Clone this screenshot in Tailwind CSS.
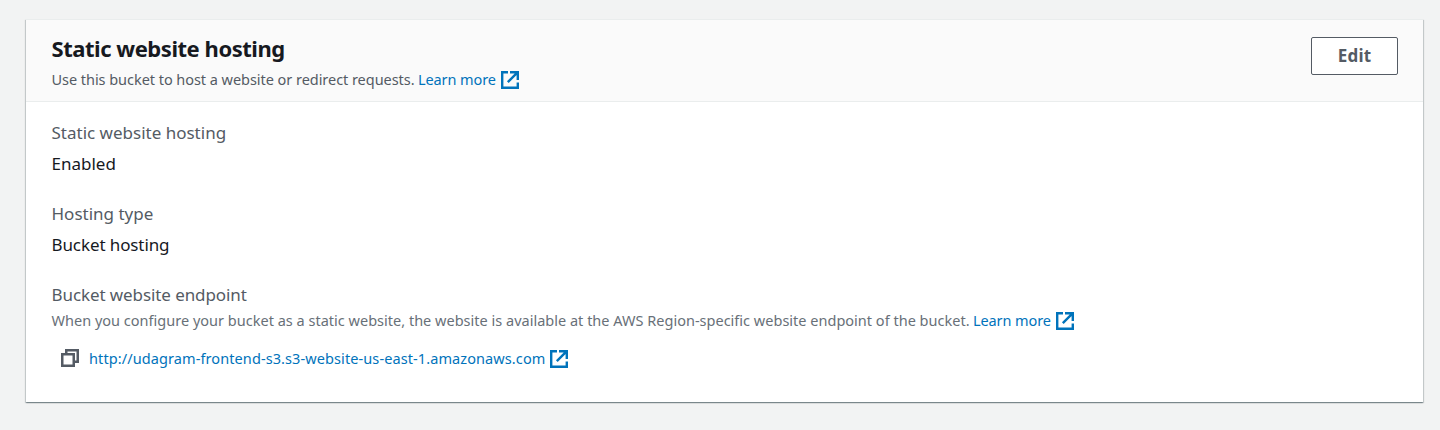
<!DOCTYPE html>
<html lang="en"><head><meta charset="utf-8"><title>Static website hosting</title>
<script src="https://cdn.jsdelivr.net/npm/@tailwindcss/browser@4"></script></head>
<body class="h-[430px] overflow-hidden bg-[#f2f3f3] pt-[19px] pr-[17px] pl-[26px] font-['Noto_Sans',sans-serif] text-[#16191f]">
<svg class="hidden"><symbol id="external" viewBox="0 0 18 18"><path d="M7 1.2H1.2v15.6h15.6V11.5M9 1.2h7.8V9M16.3 1.7 6.8 11.2" fill="none" stroke="currentColor" stroke-width="2.4"/></symbol></svg>
<main class="h-[383px] border-t border-[#eaeded] bg-white shadow-[0_1px_1px_0_rgba(0,28,36,0.3),1px_1px_1px_0_rgba(0,28,36,0.15),-1px_1px_1px_0_rgba(0,28,36,0.15)]">
<header class="flex h-[82px] justify-between border-b border-[#eaeded] bg-[#fafafa] pr-[25px] pl-[25.5px]">
<div class="pt-[14px]">
<h2 class="h-7 text-[22px] leading-7 font-bold tracking-[-0.46px] whitespace-nowrap">Static website hosting</h2>
<p class="mt-[8px] flex h-5 items-center text-[14.5px] leading-5 whitespace-nowrap text-[#545b64]"><span class="w-[363px] pb-[2px] tracking-[-0.045px]">Use this bucket to host a website or redirect requests.</span><a class="ml-[3.5px] flex items-center text-[#0073bb]"><span class="w-[83px] pb-[2px] tracking-[-0.1px]">Learn more</span><svg class="size-[18px]"><use href="#external"/></svg></a></p>
</div>
<button class="mt-[17px] h-[38px] w-[87px] rounded-[2px] border border-[#545b64] bg-white text-[17px] font-bold tracking-[0.2px] text-[#545b64]">Edit</button>
</header>
<dl class="pt-[19px] pl-[25.5px] text-[17px] leading-6 whitespace-nowrap">
<dt class="text-[#545b64]">Static website hosting</dt>
<dd class="mt-[7px]">Enabled</dd>
<dt class="mt-[26px] text-[#545b64]">Hosting type</dt>
<dd class="mt-[7px] tracking-[-0.1px]">Bucket hosting</dd>
<dt class="mt-[26px] tracking-[-0.09px] text-[#545b64]">Bucket website endpoint</dt>
<dd class="mt-[4px] flex h-5 items-center text-[14.5px] text-[#687078]"><span class="w-[918px] pb-[2px] tracking-[0.01px]">When you configure your bucket as a static website, the website is available at the AWS Region-specific website endpoint of the bucket.</span><a class="ml-[3.5px] flex items-center text-[#0073bb]"><span class="w-[83px] pb-[2px] tracking-[-0.1px]">Learn more</span><svg class="size-[18px]"><use href="#external"/></svg></a></dd>
<dd class="mt-[18px] ml-[9.5px] flex h-5 items-center text-[14.5px]"><svg class="mb-[2px] size-[18px] text-[#545b64]" viewBox="0 0 18 18" fill="none" stroke="currentColor" stroke-width="2.5"><path d="M1.25 5.25h11.5v11.5H1.25zM5.25 5V1.25h11.5v11.5H13"/></svg><a class="ml-[10px] flex items-center text-[#0073bb]"><span class="w-[461px] pb-[2px] tracking-[0.095px]">http://udagram-frontend-s3.s3-website-us-east-1.amazonaws.com</span><svg class="size-[18px]"><use href="#external"/></svg></a></dd>
</dl>
</main>
</body></html>
